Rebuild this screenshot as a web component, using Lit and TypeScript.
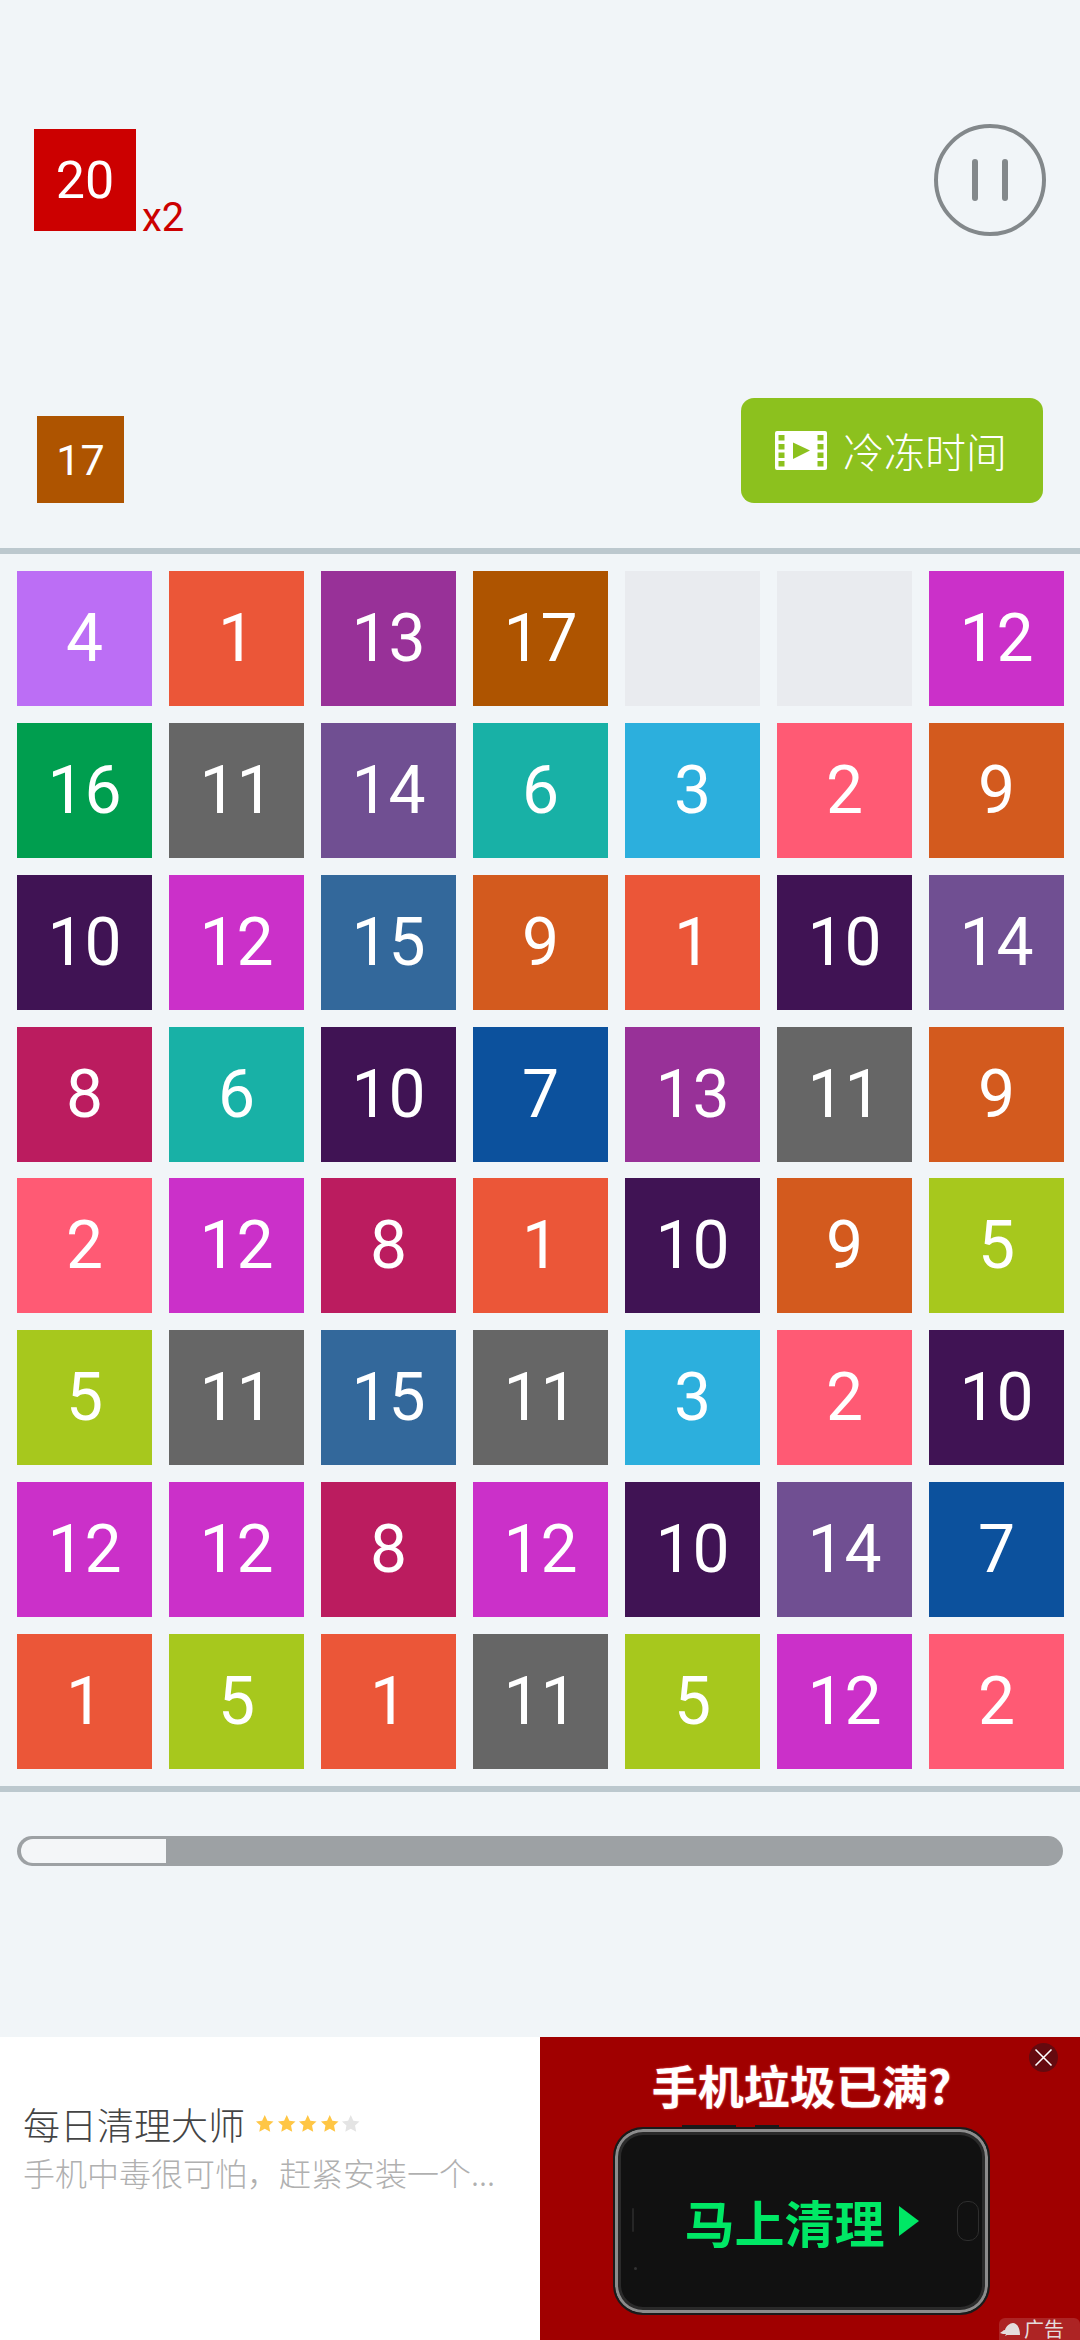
import { LitElement, html, css, svg } from "lit";
import { customElement } from "lit/decorators.js";

const C: Record<number, string> = {
  1: "#eb5638", 2: "#ff5a74", 3: "#2cafdd", 4: "#bc6ef5", 5: "#a7c81d", 6: "#18b1a6",
  7: "#0c519d", 8: "#bb1c5f", 9: "#d35a1e", 10: "#401354", 11: "#666666", 12: "#cb30c9",
  13: "#983198", 14: "#704f92", 15: "#33689b", 16: "#009e4f", 17: "#ae5400",
};
const GRID: number[][] = [
  [4, 1, 13, 17, 0, 0, 12],
  [16, 11, 14, 6, 3, 2, 9],
  [10, 12, 15, 9, 1, 10, 14],
  [8, 6, 10, 7, 13, 11, 9],
  [2, 12, 8, 1, 10, 9, 5],
  [5, 11, 15, 11, 3, 2, 10],
  [12, 12, 8, 12, 10, 14, 7],
  [1, 5, 1, 11, 5, 12, 2],
];
const star = "M10 1l2.7 5.8 6.3.8-4.6 4.3 1.2 6.3L10 15.1 4.4 18.2l1.2-6.3L1 7.6l6.3-.8z";

@customElement("app-root")
export class AppRoot extends LitElement {
  static styles = css`
    :host { display: block; width: 1080px; height: 2340px; background: #f1f5f8; overflow: hidden;
      font-family: Roboto, "Noto Sans CJK SC", sans-serif; color: #fff; }
    .top { height: 548px; display: flex; flex-direction: column; box-sizing: border-box; }
    .row1 { display: flex; justify-content: space-between; align-items: flex-start; padding: 124px 34px 0 34px; }
    .target { display: flex; align-items: flex-end; gap: 6px; margin-top: 5px; }
    .redtile { width: 102px; height: 102px; background: #cc0000; display: flex; align-items: center; justify-content: center; font-size: 52px; }
    .mult { color: #cc0000; font-size: 40px; line-height: 40px; margin-bottom: -7px; }
    .pause { display: block; width: 112px; height: 112px; }
    .row2 { display: flex; justify-content: space-between; align-items: flex-end; padding: 0 37px; margin-top: auto; margin-bottom: 45px; }
    .nexttile { width: 87px; height: 87px; background: #ae5400; display: flex; align-items: center; justify-content: center; font-size: 43px; }
    .freeze { width: 302px; height: 105px; background: #8cc11e; border-radius: 13px; display: flex; align-items: center; gap: 16px;
      padding-left: 34px; box-sizing: border-box; font-family: "Noto Sans CJK SC", sans-serif; font-size: 41px; font-weight: 300; line-height: 1; }
    .freeze svg { display: block; width: 52px; height: 39px; flex: none; }
    .rule { height: 6px; background: #bcc8ce; }
    .grid { height: 1232px; box-sizing: border-box; padding: 17px; display: grid;
      grid-template-columns: repeat(7, 135px); grid-auto-rows: 135px; column-gap: 17px; row-gap: 16.86px; }
    .tile { display: flex; align-items: center; justify-content: center; font-size: 66px; }
    .tile.empty { background: #e9ebef; }
    .mid { height: 245px; box-sizing: border-box; padding: 44px 17px 0; }
    .track { height: 30px; box-sizing: border-box; padding: 3px 0 3px 4px; border-radius: 15px; background: #9da1a4; }
    .fill { width: 145px; height: 24px; background: #f4f6f8; border-radius: 12px 0 0 12px; }
    .ad { height: 303px; display: flex; }
    .adl { width: 540px; background: #fff; box-sizing: border-box; padding: 64px 0 0 23px; font-family: "Noto Sans CJK SC", sans-serif; }
    .adtitle { display: flex; align-items: center; gap: 10px; color: #444; font-size: 37px; line-height: 46px; font-weight: 300; }
    .stars { display: flex; gap: 2px; }
    .stars svg { display: block; width: 19.5px; height: 19.5px; }
    .adsub { color: #b0b0b0; font-size: 32px; line-height: 46px; margin-top: 2px; white-space: nowrap; font-weight: 300; }
    .adr { width: 540px; background: #a00000; position: relative; overflow: hidden; box-sizing: border-box; display: flex; flex-direction: column;
      align-items: center; padding: 22px 17px 0 0; font-family: "Noto Sans CJK SC", sans-serif; }
    .adhead { font-size: 46px; font-weight: 700; line-height: 50px; white-space: nowrap; text-shadow: 0 0 2px #ff8080; }
    .phone { position: relative; width: 377px; height: 188px; margin-top: 18px; box-sizing: border-box; border-radius: 30px; border: 2px solid #1a1a1a;
      background: #111; box-shadow: inset 0 0 0 3px #8c8c8c, inset 0 0 0 6px #2a2a2a; display: flex; align-items: center; justify-content: center;
      padding-right: 0; gap: 14px; color: #00e865; font-size: 50px; font-weight: 700; line-height: 1; }
    .phone .go { width: 0; height: 0; border-left: 20px solid #00e865; border-top: 15px solid transparent; border-bottom: 15px solid transparent; }
    .home { position: absolute; right: 9px; top: 72px; width: 20px; height: 38px; border: 1px solid #2e2e2e; border-radius: 10px; }
    .ear { position: absolute; left: 17px; top: 79px; width: 2px; height: 24px; background: #262626; border-radius: 2px; }
    .cam { position: absolute; left: 19px; top: 138px; width: 3px; height: 3px; background: #333; border-radius: 50%; }
    .btn1, .btn2 { position: absolute; top: -4px; height: 2px; background: #1a1a1a; }
    .btn1 { left: 67px; width: 54px; }
    .btn2 { left: 140px; width: 24px; }
    .close { position: absolute; right: 22px; top: 6px; width: 29px; height: 29px; }
    .badge { position: absolute; right: 0; bottom: 0; width: 64px; height: 22px; padding-left: 17px; background: rgba(255,255,255,.14); border-radius: 6px 6px 0 0;
      display: flex; align-items: flex-start; color: #e4dcdc; font-size: 20px; line-height: 22px; white-space: nowrap; }
    .badge svg { position: absolute; left: 1px; top: 4px; width: 21px; height: 15px; }
    .badge span { margin-left: 8px; }
  `;

  render() {
    return html`
      <div class="top">
        <div class="row1">
          <div class="target"><div class="redtile">20</div><div class="mult">x2</div></div>
          <svg class="pause" viewBox="0 0 112 112">
            <circle cx="56" cy="56" r="54" fill="none" stroke="#83888b" stroke-width="4"></circle>
            <rect x="38" y="35" width="6" height="42" rx="3" fill="#83888b"></rect>
            <rect x="68" y="35" width="6" height="42" rx="3" fill="#83888b"></rect>
          </svg>
        </div>
        <div class="row2">
          <div class="nexttile">17</div>
          <div class="freeze" style="margin-right:0">
            <svg viewBox="0 0 52 39">
              <rect width="52" height="39" rx="2" fill="#fff"></rect>
              ${[4, 13, 21.5, 30].map((y) => svg`
                <rect x="3.5" y="${y}" width="6" height="5.5" fill="#8cc11e"></rect>
                <rect x="42.5" y="${y}" width="6" height="5.5" fill="#8cc11e"></rect>`)}
              <path d="M18 11.500L35 19.500 18 28z" fill="#8cc11e"></path>
            </svg>
            <span>冷冻时间</span>
          </div>
        </div>
      </div>
      <div class="rule"></div>
      <div class="grid">
        ${GRID.flat().map((n) =>
          n
            ? html`<div class="tile" style="background:${C[n]}">${n}</div>`
            : html`<div class="tile empty"></div>`
        )}
      </div>
      <div class="rule"></div>
      <div class="mid"><div class="track"><div class="fill"></div></div></div>
      <div class="ad">
        <div class="adl">
          <div class="adtitle">
            <span>每日清理大师</span>
            <span class="stars">
              ${[0, 1, 2, 3, 4].map((i) => html`<svg viewBox="0 0 20 20"><path d="${star}" fill="${i < 4 ? "#ffc645" : "#e4e4e4"}"></path></svg>`)}
            </span>
          </div>
          <div class="adsub">手机中毒很可怕，赶紧安装一个...</div>
        </div>
        <div class="adr">
          <div class="adhead">手机垃圾已满?</div>
          <div class="phone">
            <i class="btn1"></i><i class="btn2"></i><i class="ear"></i><i class="cam"></i><i class="home"></i>
            <span>马上清理</span><i class="go"></i>
          </div>
          <svg class="close" viewBox="0 0 29 29">
            <circle cx="14.500" cy="14.500" r="14.500" fill="#650a0f"></circle>
            <path d="M6.500 6.500l16 16M22.500 6.500l-16 16" stroke="#fff" stroke-width="1.600" fill="none"></path>
          </svg>
          <div class="badge">
            <svg viewBox="0 0 21 15"><path d="M0 11c2-1 3-3 5-3 1-4 5-7 8-7 4 0 7 5 7 12H7l-2 1 1-2c-2 0-4 0-6-1z" fill="#e4dcdc"></path></svg>
            <span>广告</span>
          </div>
        </div>
      </div>
    `;
  }
}
